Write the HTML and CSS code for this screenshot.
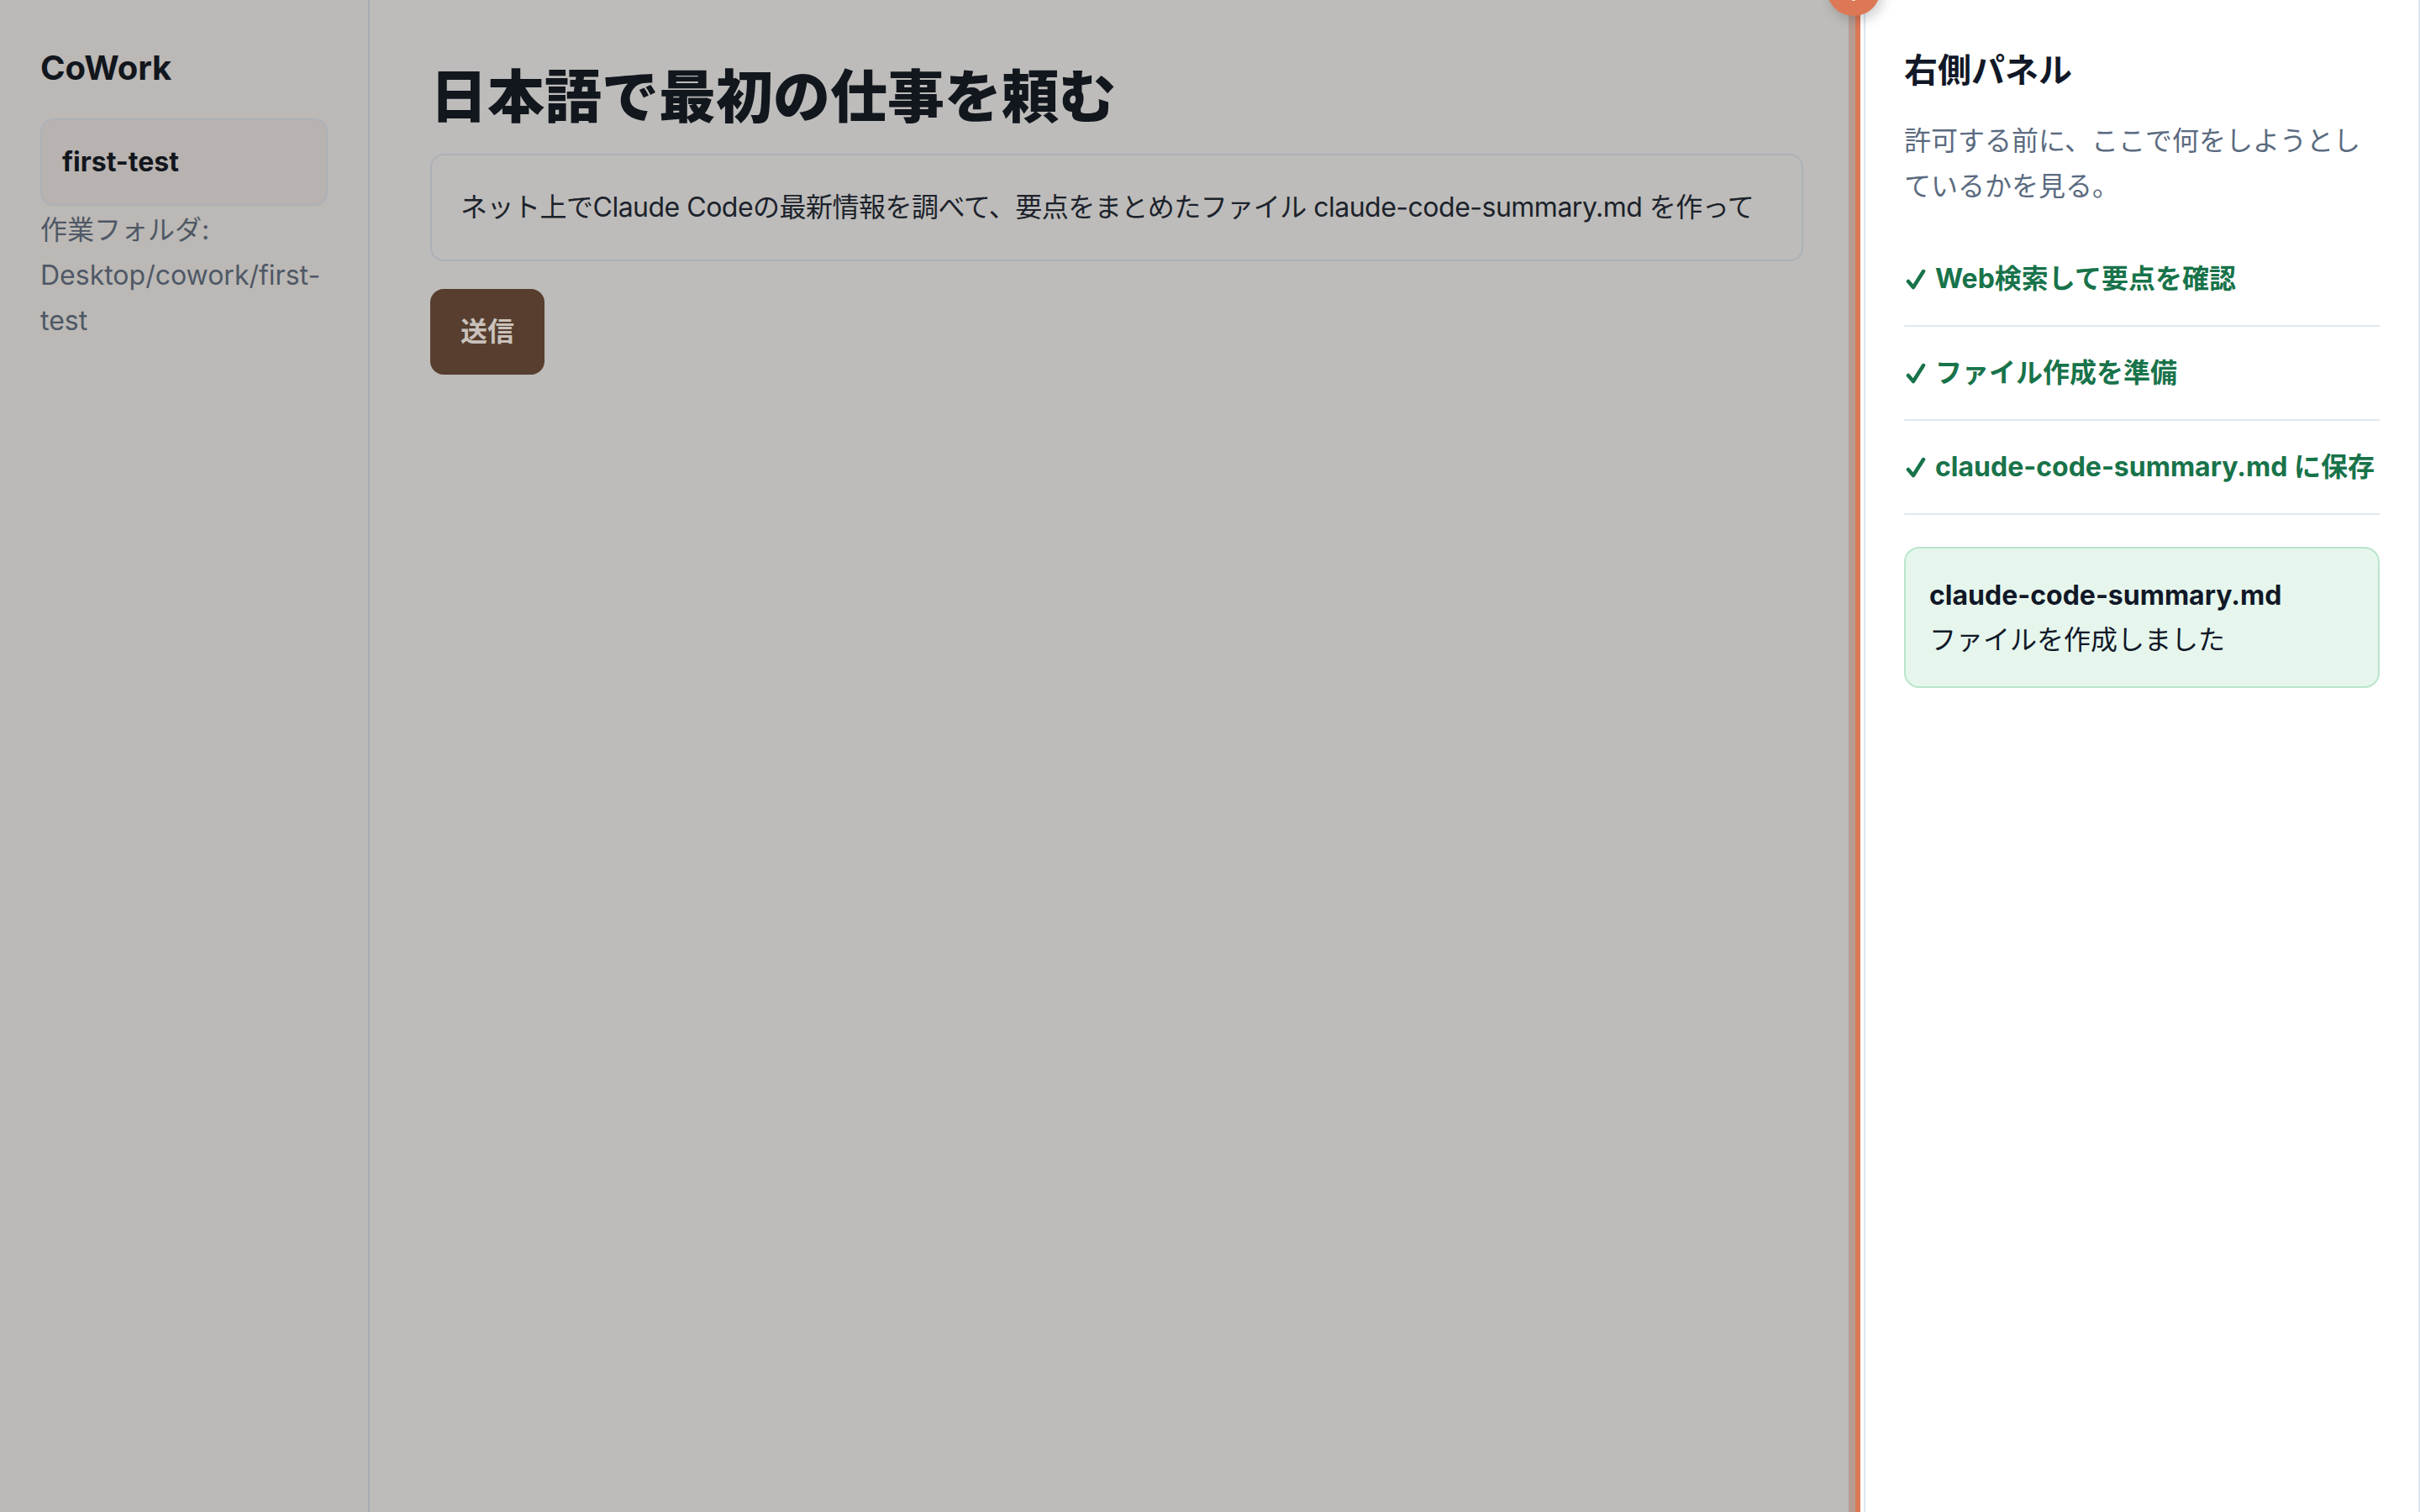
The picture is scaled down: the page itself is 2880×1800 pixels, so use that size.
FILE: index.html
```html
<!DOCTYPE html>
<html lang="ja">
<head>
<meta charset="utf-8">
<title>CoWork</title>
<link rel="stylesheet" href="styles.css">
</head>
<body>
<div class="app">
  <aside class="sidebar">
    <h1 class="brand">CoWork</h1>
    <div class="project">first-test</div>
    <p class="folder">作業フォルダ: Desktop/cowork/first-test</p>
  </aside>
  <main class="main">
    <h2 class="title">日本語で最初の仕事を頼む</h2>
    <div class="prompt">ネット上でClaude Codeの最新情報を調べて、要点をまとめたファイル claude-code-summary.md を作って</div>
    <button class="send" type="button">送信</button>
  </main>
  <section class="panel">
    <span class="badge">!</span>
    <h2 class="panel-title">右側パネル</h2>
    <p class="panel-desc">許可する前に、ここで何をしようとしているかを見る。</p>
    <ul class="steps">
      <li class="step"><svg class="check" viewBox="0 0 24 26" aria-hidden="true"><path d="M3 15 L9 22 L21 3"/></svg>Web検索して要点を確認</li>
      <li class="step"><svg class="check" viewBox="0 0 24 26" aria-hidden="true"><path d="M3 15 L9 22 L21 3"/></svg>ファイル作成を準備</li>
      <li class="step"><svg class="check" viewBox="0 0 24 26" aria-hidden="true"><path d="M3 15 L9 22 L21 3"/></svg>claude-code-summary.md に保存</li>
    </ul>
    <div class="result">
      <div class="result-name">claude-code-summary.md</div>
      <div class="result-msg">ファイルを作成しました</div>
    </div>
  </section>
</div>
</body>
</html>
```

FILE: styles.css
```css
* {
  box-sizing: border-box;
}

html,
body {
  margin: 0;
  height: 100%;
}

body {
  font-family: Inter, "Noto Sans CJK JP", "DejaVu Sans", sans-serif;
  background: #bdbcba;
  overflow: hidden;
}

.app {
  display: grid;
  grid-template-columns: 440px minmax(0, 1fr) 662px;
  height: 1800px;
}

/* Sidebar */
.sidebar {
  background: #bbb8b5;
  border-right: 2px solid #a9adb2;
  padding: 57px 48px 0;
}

.brand {
  margin: 0;
  font-size: 40px;
  line-height: 48px;
  font-weight: 700;
  color: #12161d;
}

.project {
  margin-top: 36px;
  border: 2px solid #adb1b7;
  border-radius: 16px;
  background: #b8b3b0;
  padding: 24px;
  font-size: 32px;
  line-height: 52px;
  font-weight: 700;
  color: #12161d;
}

.folder {
  margin: 2px 0 0;
  font-size: 32px;
  line-height: 54px;
  color: #4f5866;
}

/* Main */
.main {
  min-width: 0;
  background: #bdbcba;
  padding: 74px 72px 72px;
}

.title {
  margin: 0;
  font-size: 68px;
  line-height: 82px;
  font-weight: 900;
  color: #12161d;
}

.prompt {
  margin-top: 27px;
  border: 2px solid #acb0b6;
  border-radius: 16px;
  padding: 36px 34px;
  font-size: 32px;
  line-height: 52px;
  letter-spacing: -0.5px;
  color: #1c222b;
  white-space: nowrap;
  overflow: hidden;
}

.send {
  display: block;
  margin-top: 33px;
  border: 0;
  border-radius: 16px;
  background: #573e2e;
  color: #c9c1bc;
  font-family: inherit;
  font-size: 32px;
  font-weight: 700;
  line-height: 50px;
  padding: 26px 36px;
}

/* Right panel (spotlighted) */
.panel {
  position: relative;
  background: #ffffff;
  border-left: 2px solid #dce6f0;
  border-right: 2px solid #dce6f0;
  padding: 56px 46px 0;
  box-shadow: 0 0 0 4px #ffffff, 0 0 0 10px #dd7856, 0 0 0 18px #b89c92;
}

.badge {
  position: absolute;
  left: -46px;
  top: -45px;
  width: 64px;
  height: 64px;
  border-radius: 50%;
  background: #dd7856;
  color: #ffffff;
  font-size: 32px;
  font-weight: 700;
  line-height: 70px;
  text-align: center;
  box-shadow: 4px 6px 14px rgba(0, 0, 0, 0.18);
}

.panel-title {
  margin: 0;
  font-size: 40px;
  line-height: 56px;
  font-weight: 700;
  color: #111827;
}

.panel-desc {
  margin: 29px 0 0;
  font-size: 32px;
  line-height: 54px;
  color: #5b6b80;
}

.steps {
  list-style: none;
  margin: 28px 0 0;
  padding: 0;
}

.step {
  padding: 28px 0;
  border-bottom: 2px solid #e2e8f0;
  font-size: 32px;
  line-height: 54px;
  font-weight: 700;
  color: #18734a;
  white-space: nowrap;
}

.check {
  display: inline-block;
  width: 24px;
  height: 26px;
  margin: 0 11px 0 2px;
  vertical-align: -3px;
  fill: none;
  stroke: currentColor;
  stroke-width: 4.5;
  stroke-linecap: round;
  stroke-linejoin: round;
}

.result {
  margin-top: 38px;
  background: #e6f6ed;
  border: 2px solid #b9e6cb;
  border-radius: 18px;
  padding: 29px 28px;
  font-size: 32px;
  line-height: 53px;
  color: #111827;
}

.result-name {
  font-weight: 700;
}
```
